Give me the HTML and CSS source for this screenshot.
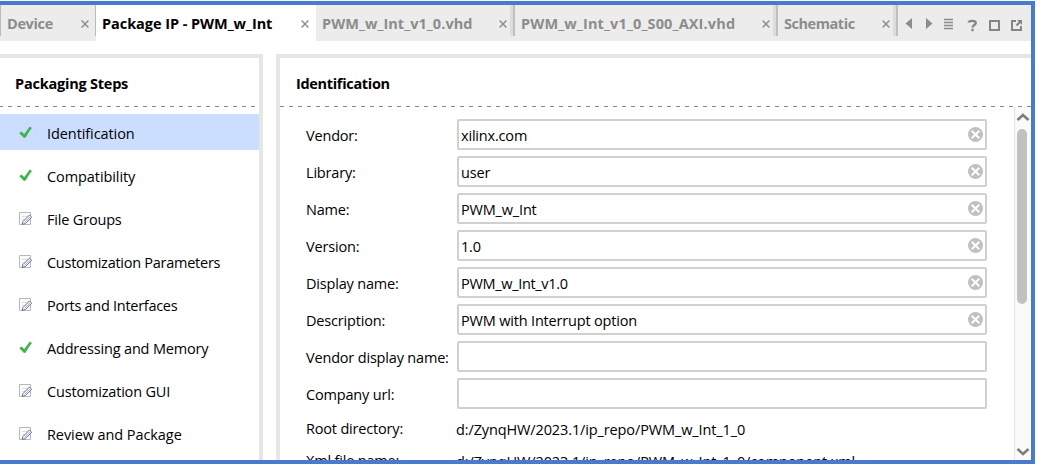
FILE: index.html
```html
<!DOCTYPE html>
<html lang="en">
<head>
<meta charset="utf-8">
<title>Package IP</title>
<link rel="stylesheet" href="styles.css">
</head>
<body>
<svg class="defs" width="0" height="0">
  <symbol id="check" viewBox="0 0 14 14"><path d="M.3 7.300 2.300 5.600 5.300 8C7.500 5 9 2.500 10.800.4L13 1.900C10.800 4.500 8.500 8 6.700 11.600L5 12Z" fill="#3db54a"/></symbol>
  <symbol id="edit" viewBox="0 0 14 14"><path d="M.5.500h11v12h-11z" fill="#fbfbfb" stroke="#b8b8b8"/><path d="M3 4.500h6M3 7.500h3" stroke="#ddd"/><path d="M3.200 12.300 3.900 9.600 10.400 3.100 12.700 5.200 6.200 11.700Z" fill="#fff" stroke="#5d6f9b"/><path d="M5.500 10.400 11 4.900" stroke="#8b99b8" stroke-width=".8"/></symbol>
  <symbol id="x" viewBox="0 0 8 8"><path d="M.6.600 7.400 7.400M7.400.600.600 7.400" stroke="#8c8c8c" stroke-width="1.400"/></symbol>
  <symbol id="clear" viewBox="0 0 15 15"><circle cx="7.500" cy="7.500" r="7.500" fill="#c0c0c0"/><path d="m3.700 3.700 7.600 7.600M11.300 3.700l-7.600 7.600" stroke="#fff" stroke-width="2"/></symbol>
</svg>
<div class="window">
  <div class="tabs">
    <div class="tab device"><span class="t">Device</span><svg class="x"><use href="#x"/></svg></div>
    <div class="tab active"><span class="t">Package IP - PWM_w_Int</span><svg class="x"><use href="#x"/></svg></div>
    <div class="tab vhd"><span class="t">PWM_w_Int_v1_0.vhd</span><svg class="x"><use href="#x"/></svg></div>
    <div class="tab axi"><span class="t">PWM_w_Int_v1_0_S00_AXI.vhd</span><svg class="x"><use href="#x"/></svg></div>
    <div class="tab schematic"><span class="t">Schematic</span><svg class="x"><use href="#x"/></svg></div>
    <svg class="tools" width="133" height="36" viewBox="898 5 133 36">
      <path d="M912 18v11l-6.500-5.500zM926 18v11l6.500-5.500z" fill="#8c8c8c"/>
      <path d="M944 19.500h9M944 22.500h9M944 25.500h9M944 28.500h9" stroke="#8c8c8c" stroke-width="1.600"/>
      <path d="M968.500 22.500c.4-1.200 1.700-1.700 3.500-1.700 2.300 0 3.800.7 3.800 2.200 0 2-3.300 2-3.300 4.500M972.500 28.700v2.500" fill="none" stroke="#858585" stroke-width="2.300"/>
      <path d="M990 21h9v9h-9z" fill="none" stroke="#858585" stroke-width="2"/>
      <path d="M1016 21h-4v9h9v-4" fill="none" stroke="#858585" stroke-width="2"/>
      <path d="M1017 20h5v5l-1.700-1.700-3 3-1.600-1.600 3-3z" fill="#858585"/>
    </svg>
  </div>
  <div class="main">
    <section class="steps">
      <h2><span class="t">Packaging Steps</span></h2>
      <ul>
        <li class="selected"><svg><use href="#check"/></svg><span class="t">Identification</span></li>
        <li><svg><use href="#check"/></svg><span class="t">Compatibility</span></li>
        <li><svg><use href="#edit"/></svg><span class="t">File Groups</span></li>
        <li><svg><use href="#edit"/></svg><span class="t">Customization Parameters</span></li>
        <li><svg><use href="#edit"/></svg><span class="t">Ports and Interfaces</span></li>
        <li><svg><use href="#check"/></svg><span class="t">Addressing and Memory</span></li>
        <li><svg><use href="#edit"/></svg><span class="t">Customization GUI</span></li>
        <li><svg><use href="#edit"/></svg><span class="t">Review and Package</span></li>
      </ul>
    </section>
    <section class="details">
      <h2><span class="t">Identification</span></h2>
      <div class="body">
        <div class="form">
          <div class="row"><span class="label t">Vendor:</span><div class="field"><span class="t">xilinx.com</span><svg><use href="#clear"/></svg></div></div>
          <div class="row"><span class="label t">Library:</span><div class="field"><span class="t">user</span><svg><use href="#clear"/></svg></div></div>
          <div class="row"><span class="label t">Name:</span><div class="field"><span class="t">PWM_w_Int</span><svg><use href="#clear"/></svg></div></div>
          <div class="row"><span class="label t">Version:</span><div class="field"><span class="t">1.0</span><svg><use href="#clear"/></svg></div></div>
          <div class="row"><span class="label t">Display name:</span><div class="field"><span class="t name-version">PWM_w_Int_v1.0</span><svg><use href="#clear"/></svg></div></div>
          <div class="row"><span class="label t">Description:</span><div class="field"><span class="t">PWM with Interrupt option</span><svg><use href="#clear"/></svg></div></div>
          <div class="row"><span class="label t">Vendor display name:</span><div class="field"></div></div>
          <div class="row"><span class="label t">Company url:</span><div class="field"></div></div>
          <div class="row plain"><span class="label t">Root directory:</span><span class="value t">d:/ZynqHW/2023.1/ip_repo/PWM_w_Int_1_0</span></div>
          <div class="row plain"><span class="label t">Xml file name:</span><span class="value t">d:/ZynqHW/2023.1/ip_repo/PWM_w_Int_1_0/component.xml</span></div>
        </div>
        <div class="scroll">
          <svg width="14" height="8" viewBox="0 0 14 8"><path d="m1.500 7 5.500-5 5.500 5" fill="none" stroke="#7d7d7d" stroke-width="2.600"/></svg>
          <div class="thumb"></div>
          <svg width="14" height="8" viewBox="0 0 14 8"><path d="m1.500 1 5.500 5 5.500-5" fill="none" stroke="#7d7d7d" stroke-width="2.600"/></svg>
        </div>
      </div>
    </section>
  </div>
</div>
</body>
</html>
```
FILE: styles.css
```css
* { box-sizing: border-box; }
body { margin: 0; background: #fff; overflow: hidden; font: 14.5px/20px "Open Sans", "Noto Sans", sans-serif; color: #000; }
svg { display: block; flex: none; }
.defs { position: absolute; }
.t { white-space: nowrap; letter-spacing: -.18px; }
.window { width: 1035px; height: 463px; margin-top: 1px; border: solid #487bcb; border-width: 4px 4px 4px 0; display: flex; flex-direction: column; overflow: hidden; }
.tabs { height: 36px; flex: none; display: flex; background: #ececec; font-weight: 700; color: #8c8c8c; }
.tab { display: flex; justify-content: space-between; height: 36px; padding: 9px 7px 0 6px; }
.tab .x { width: 8px; height: 8px; margin-top: 6px; }
.device { width: 96px; padding-left: 7px; background: linear-gradient(90deg, #bbb 1px, transparent 1px 95px, #bbb 95px) 0 0 / 96px 31px no-repeat; }
.active { width: 220px; background: #fff; color: #000; }
.vhd { width: 199px; padding-right: 8px; }
.axi { width: 263px; padding-right: 8px; }
.schematic { width: 120px; padding-right: 8px; }
.device .t { letter-spacing: -.35px; }
.active .t { letter-spacing: -.05px; }
.vhd .t { letter-spacing: .05px; }
.axi .t { letter-spacing: .14px; }
.schematic .t { letter-spacing: -.45px; }
.vhd, .axi, .schematic { background: linear-gradient(90deg, #ddd 3px, #bfbfbf 3px) right 0 top 0 / 5px 31px no-repeat; }
.main { height: 406px; margin-top: 13px; flex: none; display: flex; gap: 13px; }
.steps { width: 263px; border: solid #e6e6e6; border-width: 4px 4px 0 0; }
.details { width: 755px; border: solid #e6e6e6; border-width: 4px 0 0 4px; }
h2 { margin: 0; height: 49px; padding: 16px 0 0 16px; font-size: 14.5px; font-weight: 700; line-height: 20px; background: repeating-linear-gradient(90deg, #888 0 4px, transparent 4px 9px) 0 100% / 100% 1px no-repeat; }
.steps h2 { padding-left: 15px; background-image: repeating-linear-gradient(90deg, #888 0 3px, transparent 3px 8px, #888 8px 9px); }
.steps h2 .t { letter-spacing: -.22px; }
.details h2 .t { letter-spacing: -.32px; }
ul { list-style: none; margin: 7px 0 0; padding: 0; display: grid; gap: 7px; }
li { height: 36px; display: flex; align-items: center; padding: 4px 0 0 19px; gap: 14px; }
li svg { width: 14px; height: 14px; margin-top: -2px; }
.selected { background: #cbdeff; }
.selected .t, li:nth-child(2) .t { letter-spacing: -.08px; }
li:nth-child(4) .t { letter-spacing: -.26px; }
li:nth-child(5) .t { letter-spacing: -.28px; }
li:nth-child(8) .t { letter-spacing: -.08px; }
.body { height: 353px; display: flex; overflow: hidden; }
.form { width: 734px; padding: 12px 0 0 26px; display: flex; flex-direction: column; gap: 6px; }
.row { display: flex; flex: none; height: 31px; }
.label { width: 151px; padding-top: 7px; flex: none; }
.field { width: 530px; height: 31px; border: 2px solid #d0d0d0; border-radius: 2px; padding: 5px 2px 0; display: flex; justify-content: space-between; }
.field svg { width: 15px; height: 15px; margin-top: 1px; }
.name-version { letter-spacing: -.32px; }
.plain { height: 26px; }
.plain .label { width: 150px; padding-top: 4px; }
.plain .value { padding-top: 5px; letter-spacing: -.12px; }
.scroll { width: 17px; border-left: 1px solid #e5e5e5; background: #fafafa; display: flex; flex-direction: column; align-items: center; padding: 6px 1px 4px 1px; }
.thumb { width: 10px; height: 175px; margin: 8px 2px 0 0; border-radius: 5px; background: #c1c1c1; }
.scroll svg:last-child { margin-top: auto; }
```
